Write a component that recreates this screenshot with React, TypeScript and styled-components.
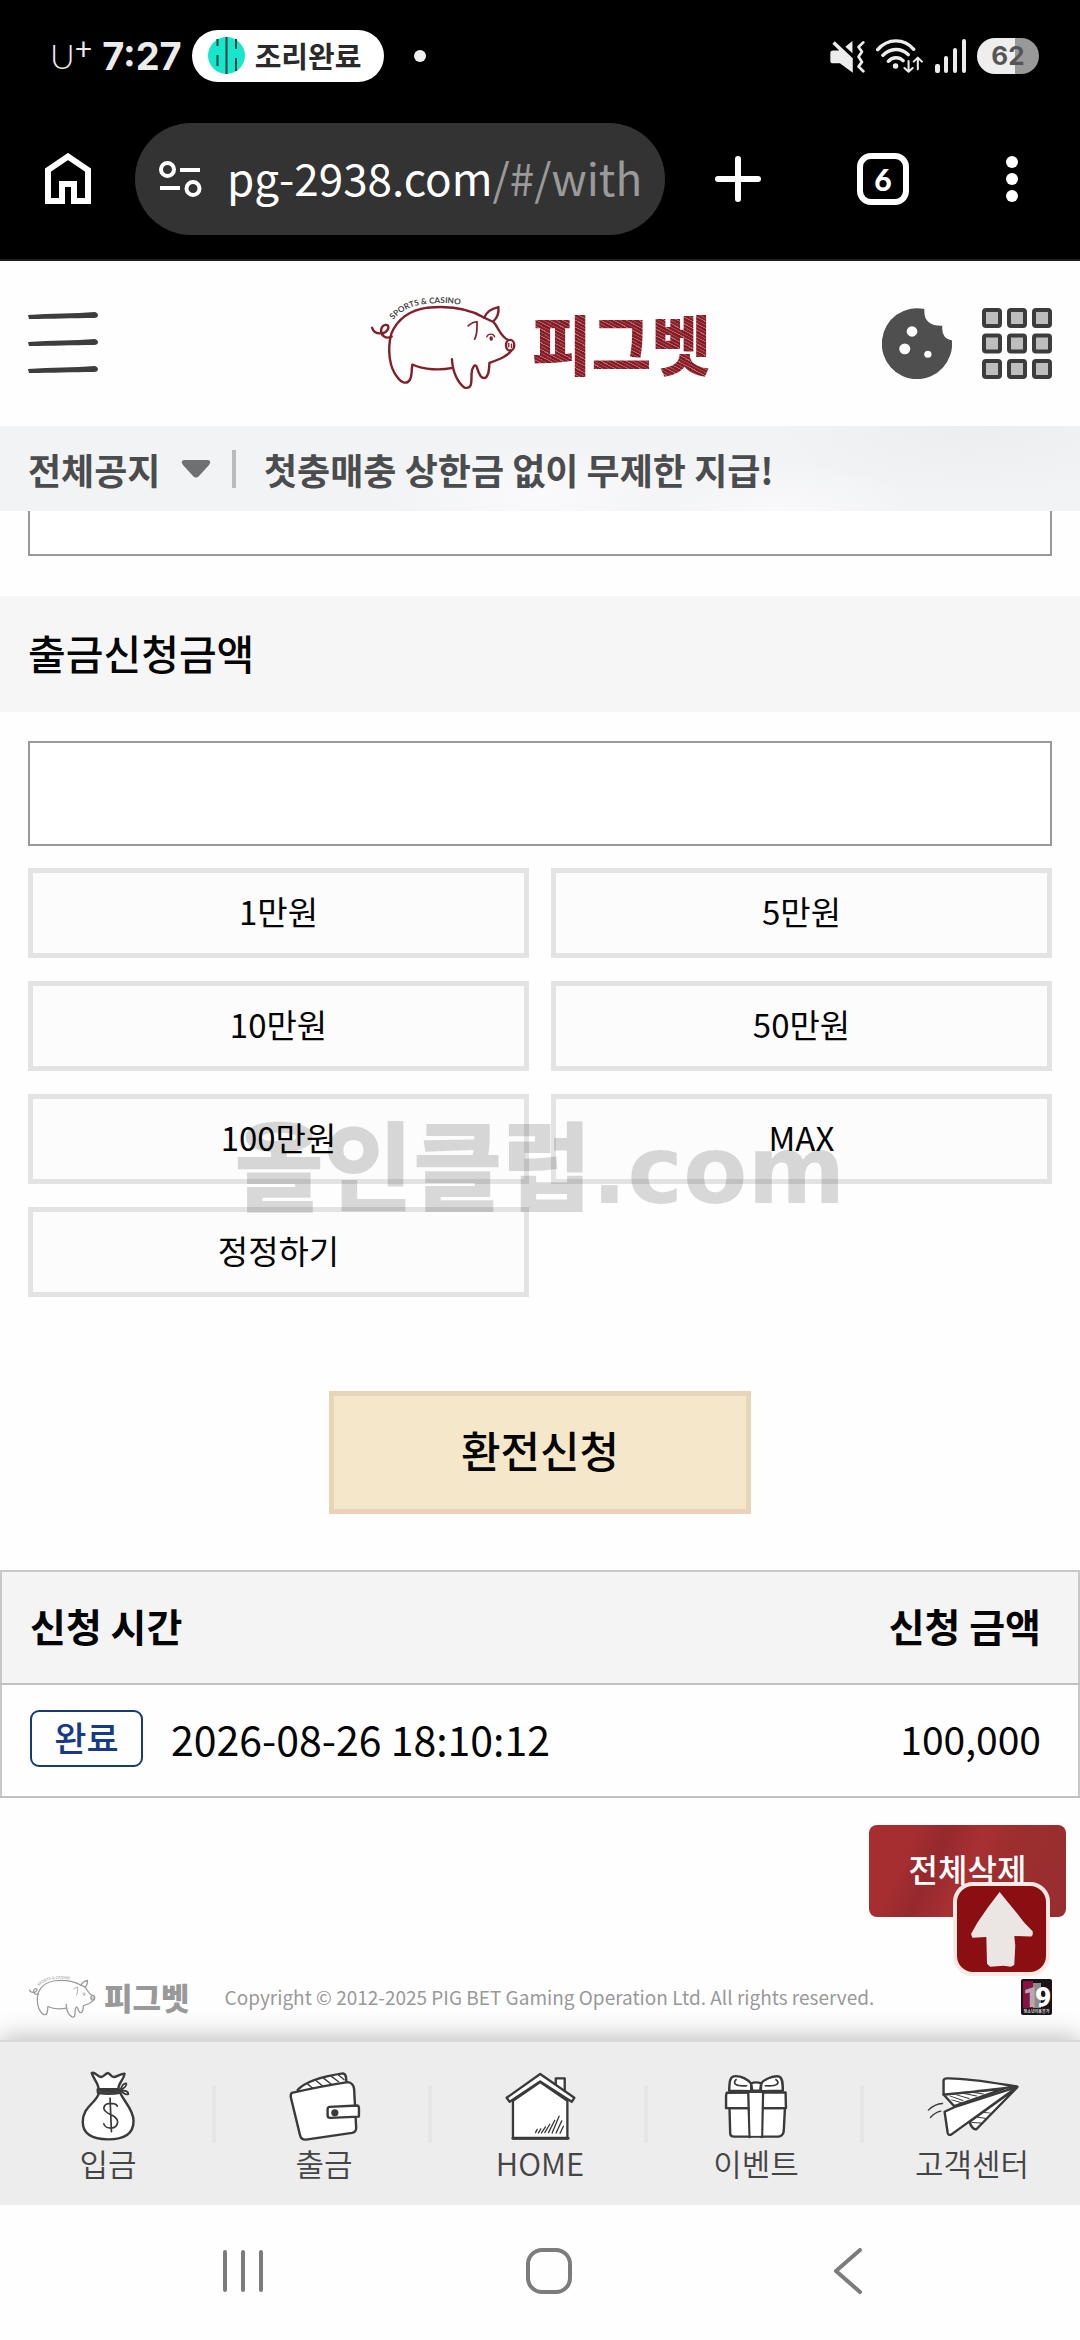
import React, { useState } from "react";
import styled, { createGlobalStyle, css } from "styled-components";

const GlobalStyle = createGlobalStyle`
  * { box-sizing: border-box; }
  body {
    margin: 0;
    background: #fefefe;
    color: #050505;
    font-family: "Noto Sans CJK KR", "Noto Sans", sans-serif;
  }
  button, input, select {
    font: inherit;
    color: inherit;
    margin: 0;
    padding: 0;
    border: 0;
    border-radius: 0;
    background: none;
  }
  a { color: inherit; text-decoration: none; }
  svg { display: block; flex: none; }
`;

const Page = styled.div`
  display: flex;
  flex-direction: column;
  min-height: 100vh;
`;

/* ---------- phone status bar ---------- */

const StatusBar = styled.div`
  display: flex;
  align-items: center;
  justify-content: space-between;
  height: 112px;
  padding: 0 41px 0 50px;
  background: #000;
  color: #ececec;
`;

const StatusGroup = styled.div<{ $gap: number }>`
  display: flex;
  align-items: center;
  gap: ${(p) => p.$gap}px;
`;

const Carrier = styled.span`
  font-family: Lato, sans-serif;
  font-size: 34px;
  font-weight: 300;
  line-height: 40px;
  sup {
    font-size: 30px;
    font-weight: 400;
    line-height: 0;
    vertical-align: 9px;
  }
`;

const Clock = styled.span`
  font-family: Inter, sans-serif;
  font-size: 38px;
  font-weight: 700;
  line-height: 40px;
`;

const LivePill = styled.span`
  display: flex;
  align-items: center;
  gap: 10px;
  height: 52px;
  padding: 0 23px 2px 16px;
  border-radius: 26px;
  background: #fff;
  color: #2a2a2a;
  font-size: 29px;
  font-weight: 700;
  line-height: 40px;
`;

const StatusDot = styled.span`
  width: 12px;
  height: 12px;
  margin-left: 20px;
  border-radius: 50%;
  background: #f0f0f0;
`;

const Battery = styled.span`
  display: grid;
  place-items: center;
  width: 62px;
  height: 36px;
  border-radius: 18px;
  background: linear-gradient(90deg, #eee 62%, #999 62%);
  color: #555;
  font-family: Inter, sans-serif;
  font-size: 26px;
  font-weight: 700;
  line-height: 36px;
`;

/* ---------- browser toolbar ---------- */

const BrowserBar = styled.div`
  display: flex;
  align-items: center;
  gap: 44px;
  height: 149px;
  padding: 11px 61px 25px 45px;
  border-bottom: 2px solid #1e1e1e;
  background: #000;
  color: #fff;
`;

const BrowserActions = styled.div`
  display: flex;
  align-items: center;
  gap: 96px;
  padding-left: 6px;
`;

const BareButton = styled.button`
  display: grid;
  place-items: center;
  cursor: pointer;
`;

const AddressField = styled.div`
  display: flex;
  flex: 1;
  align-items: center;
  gap: 25px;
  min-width: 0;
  height: 112px;
  padding: 0 24px;
  border-radius: 56px;
  background: #333;
`;

const AddressText = styled.span`
  padding-bottom: 3px;
  font-size: 44px;
  font-weight: 400;
  line-height: 60px;
  white-space: nowrap;
  span { color: #9a9a9a; }
`;

const TabCount = styled(BareButton)`
  width: 52px;
  height: 52px;
  border: 6px solid #fff;
  border-radius: 14px;
  font-family: Lato, sans-serif;
  font-size: 30px;
  font-weight: 900;
  line-height: 36px;
`;

/* ---------- site header ---------- */

const SiteHeader = styled.header`
  display: grid;
  grid-template-columns: 1fr auto 1fr;
  align-items: center;
  height: 165px;
  padding: 0 28px;
`;

const MenuButton = styled(BareButton)`
  justify-self: start;
`;

const HeaderTools = styled.div`
  display: flex;
  justify-content: flex-end;
  gap: 30px;
`;

const Brand = styled.a<{ $small?: boolean }>`
  display: flex;
  align-items: center;
  gap: ${(p) => (p.$small ? 8 : 15)}px;
`;

const BrandName = styled.span<{ $small?: boolean }>`
  font-weight: 900;
  font-size: ${(p) => (p.$small ? 31 : 65)}px;
  line-height: ${(p) => (p.$small ? 40 : 80)}px;
  ${(p) =>
    p.$small
      ? css`
          color: #999;
        `
      : css`
          padding-bottom: 3px;
          color: transparent;
          background: repeating-linear-gradient(28deg, #8c1e28 0 2px, #a8424a 2px 3px, #7d1d26 3px 5px, #b9646a 5px 6px);
          background-clip: text;
          -webkit-background-clip: text;
        `}
`;

const NoticeBar = styled.div`
  display: flex;
  align-items: center;
  height: 85px;
  padding: 0 28px;
  background:
    radial-gradient(ellipse 200px 70px at 90% 0, rgba(234, 235, 238, 0.7), transparent),
    radial-gradient(ellipse 140px 50px at 72% 100%, rgba(250, 250, 252, 0.9), transparent),
    radial-gradient(ellipse 160px 50px at 50% 80%, rgba(251, 251, 253, 0.9), transparent),
    #f2f3f5;
  color: #4b4c4e;
  font-size: 36px;
  font-weight: 700;
  line-height: 50px;
`;

const NoticePicker = styled.label`
  display: flex;
  align-items: center;
  gap: 20px;
  padding-right: 21px;
  select { appearance: none; cursor: pointer; }
`;

const NoticeRule = styled.span`
  width: 4px;
  height: 38px;
  margin-right: 28px;
  background: #b9babc;
`;

/* ---------- withdrawal form ---------- */

const Form = styled.form`
  display: flex;
  flex-direction: column;
`;

const ClippedField = styled.div`
  display: flex;
  align-items: flex-end;
  height: 45px;
  margin: 0 28px 40px;
  overflow: hidden;
`;

const TextField = styled.input`
  flex: none;
  width: 100%;
  height: 105px;
  padding: 0 24px;
  border: 2px solid #999;
  background: #fff;
  font-size: 39px;
`;

const SectionLabel = styled.label`
  height: 116px;
  padding: 0 28px;
  background: #f6f6f6;
  font-size: 41px;
  font-weight: 500;
  line-height: 112px;
`;

const Fields = styled.div`
  display: flex;
  flex-direction: column;
  gap: 22px;
  padding: 29px 28px 0;
`;

const AmountGrid = styled.div`
  display: grid;
  grid-template-columns: 1fr 1fr;
  gap: 23px 22px;
`;

const AmountButton = styled.button`
  height: 90px;
  padding-bottom: 5px;
  border: 5px solid #e3e3e3;
  background: #fcfcfc;
  font-size: 33px;
  line-height: 40px;
  cursor: pointer;
`;

const SubmitButton = styled.button`
  align-self: center;
  width: 422px;
  height: 123px;
  margin: 94px 0 56px;
  padding-bottom: 8px;
  border: 5px solid #e6d5b9;
  border-bottom-color: #ecd0ba;
  background: #f5e8ca;
  font-size: 43px;
  font-weight: 500;
  line-height: 60px;
  cursor: pointer;
`;

const Watermark = styled.div`
  position: absolute;
  top: 1096px;
  left: 50%;
  display: flex;
  align-items: baseline;
  transform: translateX(-50%);
  color: rgba(0, 0, 0, 0.15);
  font-size: 97px;
  font-weight: 900;
  line-height: 130px;
  white-space: nowrap;
  pointer-events: none;
  span {
    font-family: "DejaVu Sans", sans-serif;
    font-size: 94px;
    font-weight: 700;
  }
`;

/* ---------- history ---------- */

const History = styled.table`
  width: 100%;
  border-collapse: collapse;
  border: 2px solid #c8c8c8;
  th, td { height: 113px; padding: 0 37px 5px 28px; text-align: left; border-bottom: 2px solid #c0c0c0; }
  th:last-child, td:last-child { text-align: right; }
  th { background: #f4f4f4; font-size: 39px; font-weight: 700; line-height: 50px; }
  td { font-size: 39px; line-height: 50px; }
`;

const Entry = styled.div`
  display: flex;
  align-items: center;
  gap: 28px;
  font-size: 41px;
`;

const Badge = styled.span`
  width: 113px;
  height: 57px;
  border: 2px solid #163a76;
  border-radius: 9px;
  color: #173a86;
  font-size: 35px;
  font-weight: 500;
  line-height: 50px;
  text-align: center;
`;

const Actions = styled.div`
  position: relative;
  display: flex;
  justify-content: flex-end;
  padding: 27px 14px 0;
`;

const DeleteButton = styled.button`
  width: 197px;
  height: 92px;
  padding-bottom: 7px;
  border-radius: 8px;
  background: linear-gradient(115deg, #a72e30 0 20%, #95292e 34%, #a83032 50%, #9c2e2e 64%, #982d30 100%);
  color: #fff;
  font-size: 32px;
  font-weight: 500;
  line-height: 40px;
  cursor: pointer;
`;

const TopButton = styled.button`
  position: absolute;
  top: 84px;
  right: 30px;
  display: grid;
  place-items: center;
  width: 97px;
  height: 94px;
  border: 4px solid #fbe9e4;
  border-radius: 20px;
  background: #8b0f12;
  cursor: pointer;
`;

/* ---------- footer ---------- */

const Footer = styled.footer`
  display: flex;
  align-items: center;
  height: 42px;
  margin: 59px 28px 22px;
  color: #999;
`;

const Copyright = styled.p`
  flex: 1;
  margin: 0 0 0 35px;
  font-size: 19px;
  line-height: 28px;
`;

const BottomNav = styled.nav`
  display: grid;
  grid-template-columns: repeat(5, 1fr);
  height: 165px;
  border-top: 2px solid #d8d8d8;
  background: #ededed;
  box-shadow: 0 -2px 24px rgba(0, 0, 0, 0.28);
  clip-path: inset(-30px 0 0 0);
`;

const NavItem = styled.a`
  display: flex;
  flex-direction: column;
  align-items: center;
  padding-top: 28px;
  background: linear-gradient(#e6e6e6, #e6e6e6) right 0 top 43px / 4px 58px no-repeat;
  color: #444;
  font-size: 31px;
  font-weight: 350;
  line-height: 42px;
  &:last-child { background: none; }
`;

const NavIcon = styled.span`
  display: grid;
  place-items: center;
  height: 72px;
`;

const SystemNav = styled.nav`
  display: flex;
  align-items: center;
  justify-content: space-between;
  flex: 1;
  min-height: 134px;
  padding: 0 217px 4px 222px;
  background: #fefefe;
`;

/* ---------- drawings ---------- */

const PigMark = ({ small }: { small?: boolean }) => {
  const line = small ? "#9a9a9a" : "#82202a";
  const id = small ? "arc-small" : "arc-large";
  return (
    <svg width={small ? 68 : 148} height={small ? 44 : 97} viewBox="1070 100 430 290" preserveAspectRatio="none" fill="none" stroke={line} strokeWidth={small ? 8 : 7} strokeLinecap="round" strokeLinejoin="round" aria-hidden="true">
      <path d="M1405 168C1360 140 1300 132 1240 138C1185 146 1152 175 1135 215C1122 265 1130 318 1152 345C1165 366 1182 366 1189 353C1196 340 1193 322 1196 308C1230 325 1280 325 1313 318" />
      <path d="M1311 292C1313 330 1328 364 1348 377C1371 382 1367 358 1368 335C1369 318 1378 300 1384 318C1390 340 1398 352 1409 347C1421 337 1418 318 1420 303C1450 292 1475 282 1484 265" />
      <path d="M1405 168C1412 147 1432 139 1446 136C1448 155 1441 170 1430 180M1405 168L1430 180C1444 190 1450 224 1474 234" />
      <ellipse cx="1480" cy="250" rx="12" ry="16" />
      <path d="M1476 245V255M1484 247V257" strokeWidth="4" />
      <path d="M1358 192C1368 183 1378 180 1384 180C1383 200 1386 215 1377 232" strokeWidth="5" />
      <path d="M1412 225C1417 214 1431 214 1435 225" strokeWidth="4" />
      <ellipse cx="1425" cy="230" rx="5" ry="7" fill={line} stroke="none" />
      <path d="M1136 224C1118 234 1104 220 1105 204C1110 184 1130 186 1126 200C1118 220 1086 220 1079 198" />
      <path id={id} d="M1140 174C1170 139 1210 126 1256 125C1285 122 1315 124 1365 135" stroke="none" />
      <text fill={small ? "#aaa" : "#444"} stroke="none" fontFamily="Lato, sans-serif" fontSize="24" fontWeight="700">
        <textPath href={"#" + id}>SPORTS &amp; CASINO</textPath>
      </text>
    </svg>
  );
};

const MenuIcon = () => (
  <svg width="70" height="66" viewBox="0 0 70 66" fill="#3d3d3d" aria-hidden="true">
    {[2, 29, 56].map((y) => (
      <path key={y} d={`M0 ${y + 2}C24 ${y} 46 ${y + 1} 67 ${y - 1}Q70 ${y} 70 ${y + 2}Q70 ${y + 5} 66 ${y + 5}C44 ${y + 5} 24 ${y + 6} 1 ${y + 6}Z`} />
    ))}
  </svg>
);

const CookieIcon = () => (
  <svg width="70" height="71" viewBox="993 140 203 212" preserveAspectRatio="none" aria-hidden="true">
    <path fill="#4f4f4f" d="M1116 143A102 106 0 1 0 1196 237Q1164 230 1168 193Q1112 194 1116 143Z" />
    <circle cx="1080" cy="210" r="15.500" fill="#fff" />
    <circle cx="1059" cy="262" r="16" fill="#fff" />
    <circle cx="1126" cy="278" r="10.500" fill="#fff" />
  </svg>
);

const GridIcon = () => (
  <svg width="70" height="71" viewBox="0 0 70 71" fill="#bdbdbd" stroke="#3c3c3c" strokeWidth="4" aria-hidden="true">
    {[2, 27.5, 53].map((y) => [2, 27, 52].map((x) => <rect key={x + "-" + y} x={x} y={y} width="16" height="16" rx="2" />))}
  </svg>
);

const LiveIcon = () => (
  <svg width="37" height="37" viewBox="0 0 37 37" aria-hidden="true">
    <circle cx="18.500" cy="18.500" r="18.500" fill="#18e6cb" />
    <path d="M18.500 0V37M9.500 2V9M9.500 18V29M28 2V12M28 21V34" stroke="#17433f" strokeWidth="2" />
  </svg>
);

const MuteIcon = () => (
  <svg width="36" height="33" viewBox="836 118 106 98" preserveAspectRatio="none" fill="#ececec" aria-hidden="true">
    <path d="M840 155Q840 149 848 149H866L846 129L853 122L906 172V215L868 187H848Q840 187 840 180Z" />
    <path d="M884 138L905 121V157Z" />
    <path d="M937 125L923 139L933 153L923 168L933 183L923 197L937 211" fill="none" stroke="#ececec" strokeWidth="8" strokeLinecap="round" strokeLinejoin="round" />
  </svg>
);

const WifiIcon = () => (
  <svg width="48" height="34" viewBox="972 115 140 102" preserveAspectRatio="none" fill="none" stroke="#ececec" strokeWidth="10" strokeLinecap="round" aria-hidden="true">
    <path d="M977 147C1006 112 1054 112 1082 146M992 164C1013 141 1046 141 1066 162M1008 182C1021 168 1039 168 1051 180" />
    <circle cx="1029" cy="196" r="8" fill="#ececec" stroke="none" />
    <path d="M1067 181V211M1055 202L1067 213L1079 202M1094 206V172M1082 183L1094 171L1106 183" strokeWidth="6" strokeLinejoin="round" />
  </svg>
);

const SignalIcon = () => (
  <svg width="31" height="34" viewBox="0 0 31 34" fill="#ececec" aria-hidden="true">
    <rect x="0" y="25" width="5" height="9" rx="2" />
    <rect x="9" y="17" width="4" height="17" rx="2" />
    <rect x="18" y="9" width="4" height="25" rx="2" />
    <rect x="27" y="0" width="4" height="34" rx="2" />
  </svg>
);

const BrowserHomeIcon = () => (
  <svg width="46" height="51" viewBox="0 0 46 51" fill="none" stroke="#fff" strokeWidth="6" aria-hidden="true">
    <path d="M3 48V17L23 3.500L43 17V48H29V31H17V48Z" />
  </svg>
);

const SiteInfoIcon = () => (
  <svg width="43" height="36" viewBox="0 0 43 36" fill="none" stroke="#fff" strokeWidth="4" aria-hidden="true">
    <circle cx="8.500" cy="8.500" r="6.500" />
    <circle cx="34" cy="27.500" r="6.500" />
    <path d="M21 9H41M1 27H21" />
  </svg>
);

const PlusIcon = () => (
  <svg width="46" height="46" viewBox="0 0 46 46" stroke="#fff" strokeWidth="6" strokeLinecap="round" aria-hidden="true">
    <path d="M23 3V43M3 23H43" />
  </svg>
);

const MoreIcon = () => (
  <svg width="14" height="48" viewBox="0 0 14 48" fill="#fff" aria-hidden="true">
    <circle cx="7" cy="7" r="6" />
    <circle cx="7" cy="24" r="6" />
    <circle cx="7" cy="41" r="6" />
  </svg>
);

const ArrowUpIcon = () => (
  <svg width="64" height="76" viewBox="1246 278 188 226" preserveAspectRatio="none" fill="#ebe6e4" aria-hidden="true">
    <path d="M1333 281L1352 305L1384 344L1405 372L1430 398Q1432 414 1424 413L1376 412L1379 440L1376 498L1366 503L1345 500L1305 503L1296 494L1294 415L1253 417L1249 406L1268 372L1300 325Z" />
  </svg>
);

const AdultBadge = () => (
  <svg width="31" height="36" viewBox="0 0 31 36" aria-hidden="true">
    <rect width="31" height="36" rx="2" fill="#1b1318" />
    <rect x="2" y="2" width="10" height="27" fill="#8a1240" />
    <rect x="12" y="4" width="8" height="25" fill="#8b8b8b" />
    <text x="2" y="28" fontFamily="Roboto, sans-serif" fontWeight="900" fontSize="28" fill="#b9a7ae">1</text>
    <text x="14" y="28" fontFamily="Roboto, sans-serif" fontWeight="900" fontSize="28" fill="#fff">9</text>
    <text x="15.500" y="34" textAnchor="middle" fontFamily="Noto Sans CJK KR, sans-serif" fontWeight="700" fontSize="4" fill="#ddd">청소년이용불가</text>
  </svg>
);

const ink = { fill: "#fff", stroke: "#3a3a3a", strokeWidth: 7, strokeLinejoin: "round" as const, strokeLinecap: "round" as const, preserveAspectRatio: "none" };

const MoneyBagIcon = () => (
  <svg width="57" height="72" viewBox="225 88 165 215" {...ink} aria-hidden="true">
    <path d="M282 152C272 190 233 195 233 243C233 280 265 294 306 295C350 295 380 280 380 240C380 205 350 180 341 155Z" />
    <path d="M279 145C278 125 262 112 259 97C268 92 275 108 286 109C294 108 298 98 306 97C314 99 314 110 324 109C334 107 345 98 354 99C352 118 336 125 336 145Z" />
    <path d="M276 146C295 153 320 152 341 147V156C320 160 296 160 277 156Z" fill="#555" />
    <path d="M342 148C346 135 352 127 359 128C362 136 352 142 342 148C354 150 366 150 365 160C356 164 348 155 342 148" strokeWidth="5" />
    <path d="M333 196C328 186 296 182 294 202C295 222 334 220 334 243C332 268 298 265 294 249M312 172L316 272" fill="none" strokeWidth="5" />
  </svg>
);

const WalletIcon = () => (
  <svg width="73" height="71" viewBox="832 98 212 212" {...ink} aria-hidden="true">
    <path d="M860 155C885 125 945 112 992 105C1003 108 1000 120 1002 134L865 162Z" />
    <path d="M890 138L905 150M914 127L932 142M936 120L957 137M958 114L979 130M978 109L995 124" fill="none" strokeWidth="4" />
    <path d="M843 163C900 150 960 138 1005 131Q1022 133 1024 152L1030 268Q1030 280 1018 283L884 303Q870 304 867 290L841 180Q838 168 843 163Z" />
    <path d="M952 205L1034 201Q1038 202 1038 208V234L955 238Q947 238 947 230V212Q947 206 952 205Z" />
    <circle cx="968" cy="223" r="7" fill="#3a3a3a" />
  </svg>
);

const HouseIcon = () => (
  <svg width="71" height="69" viewBox="78 32 214 206" {...ink} aria-hidden="true">
    <path d="M231 90V51H258V98" />
    <path d="M102 118V230H266V118L184 62Z" />
    <path d="M83 109L184 38L287 109L279 121L184 60L92 121Z" />
    <path d="M170 213L175 203M179 214L186 202M188 214L200 196M198 213L213 188M209 213L228 176M220 214L241 164M232 214L249 178M244 215L254 194" fill="none" strokeWidth="4" />
    <path d="M102 230H268" strokeWidth="9" />
  </svg>
);

const GiftIcon = () => (
  <svg width="64" height="65" viewBox="540 98 186 194" {...ink} aria-hidden="true">
    <path d="M555 148C556 125 556 108 568 105C590 102 610 115 619 127L619 149Z" />
    <path d="M711 148C711 125 710 108 699 105C680 103 655 115 648 127L647 149Z" />
    <path d="M619 126Q633 120 648 126L645 148H622Z" />
    <path d="M575 115C565 125 572 136 606 133M691 115C703 123 698 136 660 133" fill="none" strokeWidth="5" />
    <path d="M556 200L558 275Q558 285 570 285H698Q714 283 714 262L717 200Z" />
    <path d="M548 154L719 153L720 200H546V162Z" />
    <path d="M611 151L615 286M653 151L650 286" fill="none" strokeWidth="8" />
    <path d="M614 155H650L648 282H617Z" stroke="none" />
  </svg>
);

const PlaneIcon = () => (
  <svg width="93" height="61" viewBox="1115 98 270 184" {...ink} aria-hidden="true">
    <path d="M1241 236Q1250 262 1262 258L1378 134Z" />
    <path d="M1166 154L1197 189L1340 137Z" />
    <path d="M1166 154V112Q1167 105 1176 105C1240 104 1320 120 1380 130C1310 138 1240 148 1166 154Z" />
    <path d="M1169 206L1197 192L1380 131L1188 275Q1180 278 1178 270Z" />
    <path d="M1184 158L1222 172M1204 155L1240 166M1226 151L1262 158M1190 170L1216 178M1252 148L1282 152M1248 238L1276 240M1262 222L1290 226M1280 207L1302 210" fill="none" strokeWidth="3" />
    <path d="M1122 201Q1140 182 1163 181M1128 223Q1142 207 1158 204" fill="none" strokeWidth="4" />
  </svg>
);

const amounts = ["1만원", "5만원", "10만원", "50만원", "100만원", "MAX", "정정하기"];

const menu = [
  { label: "입금", icon: <MoneyBagIcon /> },
  { label: "출금", icon: <WalletIcon /> },
  { label: "HOME", icon: <HouseIcon /> },
  { label: "이벤트", icon: <GiftIcon /> },
  { label: "고객센터", icon: <PlaneIcon /> },
];

const valueOf = (label: string) => {
  if (label === "정정하기") return "";
  if (label === "MAX") return "100000";
  return String(parseInt(label, 10) * 10000);
};

export default function App() {
  const [amount, setAmount] = useState("");

  return (
    <Page>
      <GlobalStyle />
      <StatusBar>
        <StatusGroup $gap={10}>
          <Carrier>U<sup>+</sup></Carrier>
          <Clock>7:27</Clock>
          <LivePill><LiveIcon />조리완료</LivePill>
          <StatusDot />
        </StatusGroup>
        <StatusGroup $gap={11}>
          <MuteIcon />
          <WifiIcon />
          <SignalIcon />
          <Battery>62</Battery>
        </StatusGroup>
      </StatusBar>

      <BrowserBar>
        <BareButton aria-label="홈"><BrowserHomeIcon /></BareButton>
        <AddressField>
          <SiteInfoIcon />
          <AddressText>pg-2938.com<span>/#/with</span></AddressText>
        </AddressField>
        <BrowserActions>
          <BareButton aria-label="새 탭"><PlusIcon /></BareButton>
          <TabCount aria-label="탭 6개">6</TabCount>
          <BareButton aria-label="더보기"><MoreIcon /></BareButton>
        </BrowserActions>
      </BrowserBar>

      <SiteHeader>
        <MenuButton aria-label="메뉴"><MenuIcon /></MenuButton>
        <Brand href="#/">
          <PigMark />
          <BrandName>피그벳</BrandName>
        </Brand>
        <HeaderTools>
          <BareButton aria-label="쿠키"><CookieIcon /></BareButton>
          <BareButton aria-label="전체 메뉴"><GridIcon /></BareButton>
        </HeaderTools>
      </SiteHeader>

      <NoticeBar>
        <NoticePicker>
          <select aria-label="공지 분류"><option>전체공지</option></select>
          <svg width="30" height="18" viewBox="0 0 30 18" fill="#6f7072" aria-hidden="true">
            <path d="M3 0H27Q31 1 28 5L18 16Q15 19 12 16L2 5Q-1 1 3 0Z" />
          </svg>
        </NoticePicker>
        <NoticeRule />
        <a href="#/notice">첫충매충 상한금 없이 무제한 지급!</a>
      </NoticeBar>

      <Form onSubmit={(e) => e.preventDefault()}>
        <ClippedField><TextField aria-label="계좌 정보" /></ClippedField>
        <SectionLabel htmlFor="amount">출금신청금액</SectionLabel>
        <Fields>
          <TextField id="amount" inputMode="numeric" value={amount} onChange={(e) => setAmount(e.target.value)} />
          <AmountGrid>
            {amounts.map((label) => (
              <AmountButton key={label} type="button" onClick={() => setAmount(valueOf(label))}>{label}</AmountButton>
            ))}
          </AmountGrid>
        </Fields>
        <SubmitButton type="submit">환전신청</SubmitButton>
      </Form>
      <Watermark>올인클럽<span>.com</span></Watermark>

      <History>
        <thead>
          <tr><th scope="col">신청 시간</th><th scope="col">신청 금액</th></tr>
        </thead>
        <tbody>
          <tr>
            <td><Entry><Badge>완료</Badge>2026-08-26 18:10:12</Entry></td>
            <td>100,000</td>
          </tr>
        </tbody>
      </History>

      <Actions>
        <DeleteButton type="button">전체삭제</DeleteButton>
        <TopButton type="button" aria-label="맨 위로"><ArrowUpIcon /></TopButton>
      </Actions>

      <Footer>
        <Brand href="#/" $small>
          <PigMark small />
          <BrandName $small>피그벳</BrandName>
        </Brand>
        <Copyright>Copyright © 2012-2025 PIG BET Gaming Operation Ltd. All rights reserved.</Copyright>
        <AdultBadge />
      </Footer>

      <BottomNav>
        {menu.map((item) => (
          <NavItem key={item.label} href="#/">
            <NavIcon>{item.icon}</NavIcon>
            {item.label}
          </NavItem>
        ))}
      </BottomNav>

      <SystemNav>
        <BareButton aria-label="최근 앱">
          <svg width="42" height="44" viewBox="0 0 42 44" stroke="#7c7c7c" strokeWidth="4" strokeLinecap="round"><path d="M3 3V41M21 3V41M39 3V41" /></svg>
        </BareButton>
        <BareButton aria-label="홈 화면">
          <svg width="46" height="46" viewBox="0 0 46 46" fill="none" stroke="#7c7c7c" strokeWidth="4"><rect x="2" y="2" width="42" height="42" rx="14" /></svg>
        </BareButton>
        <BareButton aria-label="뒤로">
          <svg width="30" height="46" viewBox="0 0 30 46" fill="none" stroke="#7c7c7c" strokeWidth="4" strokeLinecap="round" strokeLinejoin="round"><path d="M27 2L3 23L27 44" /></svg>
        </BareButton>
      </SystemNav>
    </Page>
  );
}
